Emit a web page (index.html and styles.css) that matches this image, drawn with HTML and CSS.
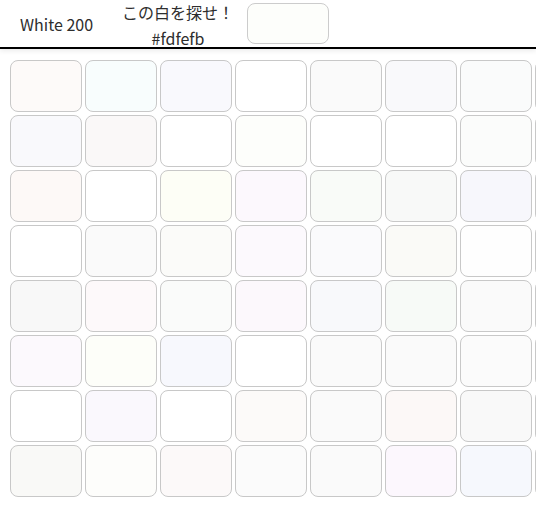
FILE: index.html
```html
<!DOCTYPE html>
<html lang="ja">
<head>
<meta charset="utf-8">
<title>White 200</title>
<link rel="stylesheet" href="styles.css">
</head>
<body>
<header class="bar">
  <div class="level">White 200</div>
  <div class="target">
    <div class="target-title">この白を探せ！</div>
    <div class="target-hex">#fdfefb</div>
  </div>
  <div class="swatch" style="background:#fdfefb"></div>
</header>
<main class="board">
  <div class="grid">
    <div class="cell" style="background:#fdfaf9"></div>
    <div class="cell" style="background:#f8fdfd"></div>
    <div class="cell" style="background:#f9f9fd"></div>
    <div class="cell" style="background:#ffffff"></div>
    <div class="cell" style="background:#fafafa"></div>
    <div class="cell" style="background:#f9f9fb"></div>
    <div class="cell" style="background:#fafbfb"></div>
    <div class="cell" style="background:#fbfbfb"></div>

    <div class="cell" style="background:#f9f9fc"></div>
    <div class="cell" style="background:#faf8f8"></div>
    <div class="cell" style="background:#ffffff"></div>
    <div class="cell" style="background:#fdfefb"></div>
    <div class="cell" style="background:#ffffff"></div>
    <div class="cell" style="background:#ffffff"></div>
    <div class="cell" style="background:#fbfcfb"></div>
    <div class="cell" style="background:#fafafa"></div>

    <div class="cell" style="background:#fdf9f7"></div>
    <div class="cell" style="background:#ffffff"></div>
    <div class="cell" style="background:#fdfef6"></div>
    <div class="cell" style="background:#fcf8fd"></div>
    <div class="cell" style="background:#f9fbf8"></div>
    <div class="cell" style="background:#f8f9f8"></div>
    <div class="cell" style="background:#f7f7fc"></div>
    <div class="cell" style="background:#fafafa"></div>

    <div class="cell" style="background:#ffffff"></div>
    <div class="cell" style="background:#fafafa"></div>
    <div class="cell" style="background:#fbfbf9"></div>
    <div class="cell" style="background:#fcf9fd"></div>
    <div class="cell" style="background:#fafafc"></div>
    <div class="cell" style="background:#fafaf7"></div>
    <div class="cell" style="background:#fefefe"></div>
    <div class="cell" style="background:#fafafa"></div>

    <div class="cell" style="background:#f8f8f8"></div>
    <div class="cell" style="background:#fdf9fa"></div>
    <div class="cell" style="background:#fafbfa"></div>
    <div class="cell" style="background:#fcf8fc"></div>
    <div class="cell" style="background:#f8f9fb"></div>
    <div class="cell" style="background:#f7faf7"></div>
    <div class="cell" style="background:#fafafa"></div>
    <div class="cell" style="background:#fafafa"></div>

    <div class="cell" style="background:#fcf9fd"></div>
    <div class="cell" style="background:#fdfef9"></div>
    <div class="cell" style="background:#f7f8fd"></div>
    <div class="cell" style="background:#ffffff"></div>
    <div class="cell" style="background:#fafafa"></div>
    <div class="cell" style="background:#fafafa"></div>
    <div class="cell" style="background:#fbfbfb"></div>
    <div class="cell" style="background:#fafafa"></div>

    <div class="cell" style="background:#ffffff"></div>
    <div class="cell" style="background:#faf8fd"></div>
    <div class="cell" style="background:#ffffff"></div>
    <div class="cell" style="background:#fcfaf9"></div>
    <div class="cell" style="background:#fafafa"></div>
    <div class="cell" style="background:#fcf8f7"></div>
    <div class="cell" style="background:#f9f9f9"></div>
    <div class="cell" style="background:#fafafa"></div>

    <div class="cell" style="background:#f9f9f7"></div>
    <div class="cell" style="background:#fdfdfb"></div>
    <div class="cell" style="background:#fcf9f9"></div>
    <div class="cell" style="background:#fbfbfb"></div>
    <div class="cell" style="background:#fafafa"></div>
    <div class="cell" style="background:#fcf7fd"></div>
    <div class="cell" style="background:#f6f8fd"></div>
    <div class="cell" style="background:#fafafa"></div>
  </div>
</main>
</body>
</html>
```

FILE: styles.css
```css
html, body {
  margin: 0;
  padding: 0;
  background: #ffffff;
  overflow: hidden;
}

body {
  font-family: "Noto Sans CJK JP", "Noto Sans", sans-serif;
  color: #2e2e2e;
  font-size: 16px;
}

.bar {
  display: flex;
  align-items: center;
  height: 47px;
  border-bottom: 2px solid #000000;
  box-shadow: 0 2px 5px rgba(0, 0, 0, 0.08);
  position: relative;
  z-index: 1;
}

.level {
  margin-left: 20px;
  width: 76px;
  white-space: nowrap;
}

.target {
  align-self: flex-start;
  margin-left: 26px;
  width: 112px;
  text-align: center;
}

.target-title {
  line-height: 24px;
  white-space: nowrap;
}

.target-hex {
  margin-top: 4px;
  line-height: 20px;
  white-space: nowrap;
}

.swatch {
  margin-left: 13px;
  width: 80px;
  height: 39px;
  border: 1px solid #cccccc;
  border-radius: 8px;
  box-sizing: content-box;
}

.board {
  padding: 11px 0 0 10px;
  overflow: hidden;
}

.grid {
  display: grid;
  grid-template-columns: repeat(8, 72px);
  grid-auto-rows: 52px;
  gap: 3px;
  width: max-content;
}

.cell {
  border: 1px solid #c8c8c8;
  border-radius: 8px;
  box-sizing: border-box;
}
```
